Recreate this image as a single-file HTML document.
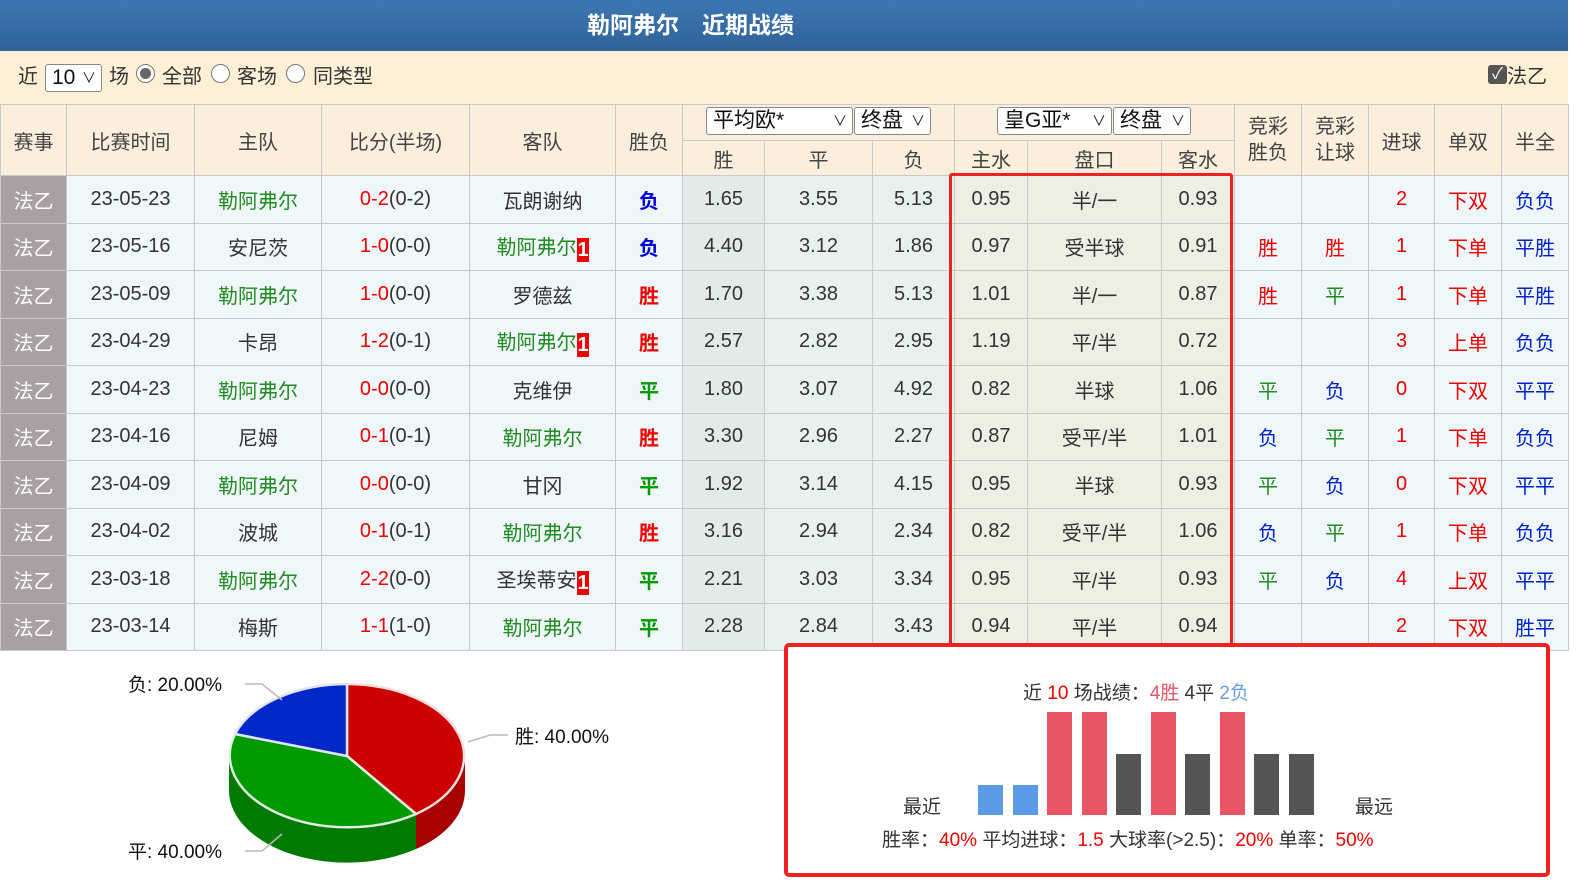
<!DOCTYPE html>
<html><head><meta charset="utf-8"><style>
*{margin:0;padding:0;box-sizing:border-box}
body{width:1592px;height:891px;overflow:hidden;background:#fff;font-family:"Liberation Sans","Noto Sans CJK SC",sans-serif;color:#333;position:relative}
.title{position:absolute;left:0;top:0;width:1568px;height:51px;background:linear-gradient(#3d77b3,#2f6299);color:#fff;font-weight:bold;font-size:23px;line-height:51px}
.title span{position:absolute;left:587px}
.filter{position:absolute;left:0;top:51px;width:1568px;height:53px;background:#fdf0d6;font-size:20px;line-height:53px}
.sel{position:absolute;border:1px solid #888;border-radius:3px;background:#fff;height:28px;font-size:21px;line-height:26px;padding-left:6px;color:#111}
.sel i{position:absolute;right:5px;top:0;font-style:normal;font-size:14px}
.radio{position:absolute;width:19px;height:19px;border:1px solid #777;border-radius:50%;background:#fff;top:13px}
table{position:absolute;left:0;top:104px;border-collapse:collapse;table-layout:fixed;width:1568px;font-size:20px}
td{border:1px solid #c9c9c9;text-align:center;white-space:nowrap;overflow:hidden}
thead td{background:#fbeedd;color:#444}
tbody td{background:#f0f7fb;height:47.5px}
tbody td.lg{background:#a9a1a1;color:#fff}
tbody td.o1{background:#e2eaea}
tbody td.o{background:#e9f0f0}
tbody td.a{background:#eeeee3}
.g{color:#228b22}.r{color:#e00}.b{color:#0022cc}
.rb{color:#e00;font-weight:bold}.bb{color:#0000dd;font-weight:bold}.gb{color:#009900;font-weight:bold}
.one{background:#e00;color:#fff;font-size:20px;font-weight:bold;padding:0 1px;display:inline-block;line-height:24px;width:12px;text-align:center;vertical-align:-2px}
.box1{position:absolute;left:949px;top:173px;width:284px;height:475px;border:3px solid #ee2222;border-radius:3px}
.box2{position:absolute;left:784px;top:643px;width:766px;height:234px;border:4px solid #ee2222;border-radius:5px;background:#fff}
.t{position:absolute;font-size:19px;white-space:nowrap}
</style></head><body>
<div class="title"><span>勒阿弗尔　近期战绩</span></div>
<div class="filter">
<span style="position:absolute;left:18px">近</span>
<div class="sel" style="left:45px;top:13px;width:57px">10<i>∨</i></div>
<span style="position:absolute;left:109px">场</span>
<div class="radio" style="left:136px"><div style="position:absolute;left:3px;top:3px;width:11px;height:11px;border-radius:50%;background:#666"></div></div>
<span style="position:absolute;left:162px">全部</span>
<div class="radio" style="left:211px"></div>
<span style="position:absolute;left:237px">客场</span>
<div class="radio" style="left:286px"></div>
<span style="position:absolute;left:313px">同类型</span>
<div style="position:absolute;left:1488px;top:14px;width:19px;height:19px;background:#555;border-radius:3px;color:#fff;font-size:16px;line-height:19px;text-align:center">✓</div>
<span style="position:absolute;left:1507px">法乙</span>
</div>
<table>
<colgroup><col style="width:66px"><col style="width:128px"><col style="width:127px"><col style="width:148px"><col style="width:146px"><col style="width:67px"><col style="width:82px"><col style="width:108px"><col style="width:82px"><col style="width:73px"><col style="width:134px"><col style="width:73px"><col style="width:67px"><col style="width:67px"><col style="width:66px"><col style="width:67px"><col style="width:67px"></colgroup>
<thead>
<tr style="height:36px"><td rowspan="2">赛事</td><td rowspan="2">比赛时间</td><td rowspan="2">主队</td><td rowspan="2">比分(半场)</td><td rowspan="2">客队</td><td rowspan="2">胜负</td><td colspan="3"></td><td colspan="3"></td><td rowspan="2" style="line-height:26px">竞彩<br>胜负</td><td rowspan="2" style="line-height:26px">竞彩<br>让球</td><td rowspan="2">进球</td><td rowspan="2">单双</td><td rowspan="2">半全</td></tr>
<tr style="height:35px"><td>胜</td><td>平</td><td>负</td><td>主水</td><td>盘口</td><td>客水</td></tr>
</thead>
<tbody>
<tr><td class="lg">法乙</td><td>23-05-23</td><td class="g">勒阿弗尔</td><td><span class="r">0-2</span>(0-2)</td><td>瓦朗谢纳</td><td class="bb">负</td><td class="o1">1.65</td><td class="o">3.55</td><td class="o">5.13</td><td class="a">0.95</td><td class="a">半/一</td><td class="a">0.93</td><td></td><td></td><td class="r">2</td><td class="r">下双</td><td class="b">负负</td></tr>
<tr><td class="lg">法乙</td><td>23-05-16</td><td>安尼茨</td><td><span class="r">1-0</span>(0-0)</td><td class="g">勒阿弗尔<span class="one">1</span></td><td class="bb">负</td><td class="o1">4.40</td><td class="o">3.12</td><td class="o">1.86</td><td class="a">0.97</td><td class="a">受半球</td><td class="a">0.91</td><td class="r">胜</td><td class="r">胜</td><td class="r">1</td><td class="r">下单</td><td class="b">平胜</td></tr>
<tr><td class="lg">法乙</td><td>23-05-09</td><td class="g">勒阿弗尔</td><td><span class="r">1-0</span>(0-0)</td><td>罗德兹</td><td class="rb">胜</td><td class="o1">1.70</td><td class="o">3.38</td><td class="o">5.13</td><td class="a">1.01</td><td class="a">半/一</td><td class="a">0.87</td><td class="r">胜</td><td class="g">平</td><td class="r">1</td><td class="r">下单</td><td class="b">平胜</td></tr>
<tr><td class="lg">法乙</td><td>23-04-29</td><td>卡昂</td><td><span class="r">1-2</span>(0-1)</td><td class="g">勒阿弗尔<span class="one">1</span></td><td class="rb">胜</td><td class="o1">2.57</td><td class="o">2.82</td><td class="o">2.95</td><td class="a">1.19</td><td class="a">平/半</td><td class="a">0.72</td><td></td><td></td><td class="r">3</td><td class="r">上单</td><td class="b">负负</td></tr>
<tr><td class="lg">法乙</td><td>23-04-23</td><td class="g">勒阿弗尔</td><td><span class="r">0-0</span>(0-0)</td><td>克维伊</td><td class="gb">平</td><td class="o1">1.80</td><td class="o">3.07</td><td class="o">4.92</td><td class="a">0.82</td><td class="a">半球</td><td class="a">1.06</td><td class="g">平</td><td class="b">负</td><td class="r">0</td><td class="r">下双</td><td class="b">平平</td></tr>
<tr><td class="lg">法乙</td><td>23-04-16</td><td>尼姆</td><td><span class="r">0-1</span>(0-1)</td><td class="g">勒阿弗尔</td><td class="rb">胜</td><td class="o1">3.30</td><td class="o">2.96</td><td class="o">2.27</td><td class="a">0.87</td><td class="a">受平/半</td><td class="a">1.01</td><td class="b">负</td><td class="g">平</td><td class="r">1</td><td class="r">下单</td><td class="b">负负</td></tr>
<tr><td class="lg">法乙</td><td>23-04-09</td><td class="g">勒阿弗尔</td><td><span class="r">0-0</span>(0-0)</td><td>甘冈</td><td class="gb">平</td><td class="o1">1.92</td><td class="o">3.14</td><td class="o">4.15</td><td class="a">0.95</td><td class="a">半球</td><td class="a">0.93</td><td class="g">平</td><td class="b">负</td><td class="r">0</td><td class="r">下双</td><td class="b">平平</td></tr>
<tr><td class="lg">法乙</td><td>23-04-02</td><td>波城</td><td><span class="r">0-1</span>(0-1)</td><td class="g">勒阿弗尔</td><td class="rb">胜</td><td class="o1">3.16</td><td class="o">2.94</td><td class="o">2.34</td><td class="a">0.82</td><td class="a">受平/半</td><td class="a">1.06</td><td class="b">负</td><td class="g">平</td><td class="r">1</td><td class="r">下单</td><td class="b">负负</td></tr>
<tr><td class="lg">法乙</td><td>23-03-18</td><td class="g">勒阿弗尔</td><td><span class="r">2-2</span>(0-0)</td><td>圣埃蒂安<span class="one">1</span></td><td class="gb">平</td><td class="o1">2.21</td><td class="o">3.03</td><td class="o">3.34</td><td class="a">0.95</td><td class="a">平/半</td><td class="a">0.93</td><td class="g">平</td><td class="b">负</td><td class="r">4</td><td class="r">上双</td><td class="b">平平</td></tr>
<tr><td class="lg">法乙</td><td>23-03-14</td><td>梅斯</td><td><span class="r">1-1</span>(1-0)</td><td class="g">勒阿弗尔</td><td class="gb">平</td><td class="o1">2.28</td><td class="o">2.84</td><td class="o">3.43</td><td class="a">0.94</td><td class="a">平/半</td><td class="a">0.94</td><td></td><td></td><td class="r">2</td><td class="r">下双</td><td class="b">胜平</td></tr>
</tbody></table>
<div class="sel" style="left:706px;top:107px;width:147px">平均欧*<i>∨</i></div>
<div class="sel" style="left:854px;top:107px;width:77px">终盘<i>∨</i></div>
<div class="sel" style="left:997px;top:107px;width:115px">皇G亚*<i>∨</i></div>
<div class="sel" style="left:1113px;top:107px;width:78px">终盘<i>∨</i></div>
<div class="box1"></div>

<svg style="position:absolute;left:0;top:650px" width="780" height="241" viewBox="0 650 780 241">
<path d="M465,756 A118,72 0 0 1 416,814 L416,849 A118,72 0 0 0 465,791 Z" fill="#a80000"/>
<path d="M416,814 A118,72 0 0 1 229,756 L229,791 A118,72 0 0 0 416,849 Z" fill="#007a00"/>
<path d="M347,756 L347,684 A118,72 0 0 1 416,814 Z" fill="#cc0000" stroke="#f2dede" stroke-width="2.5"/>
<path d="M347,756 L416,814 A118,72 0 0 1 235,734 Z" fill="#009900" stroke="#e0f0e0" stroke-width="2.5"/>
<path d="M347,756 L235,734 A118,72 0 0 1 347,684 Z" fill="#0027c8" stroke="#e0e4f4" stroke-width="2.5"/>
<polyline points="245,684 262,684 282,700" fill="none" stroke="#bbb" stroke-width="1.5"/>
<polyline points="508,735 490,735 468,742" fill="none" stroke="#bbb" stroke-width="1.5"/>
<polyline points="245,851 262,851 282,834" fill="none" stroke="#bbb" stroke-width="1.5"/>
<text x="128" y="691" font-size="19" fill="#111" font-family="Liberation Sans, Noto Sans CJK SC, sans-serif">负: 20.00%</text>
<text x="515" y="743" font-size="19" fill="#111" font-family="Liberation Sans, Noto Sans CJK SC, sans-serif">胜: 40.00%</text>
<text x="128" y="858" font-size="19" fill="#111" font-family="Liberation Sans, Noto Sans CJK SC, sans-serif">平: 40.00%</text>
</svg>

<div class="box2"></div>
<div class="t" style="left:1023px;top:678px">近 <span style="color:#e00">10</span> 场战绩：<span style="color:#e85566">4胜</span> 4平 <span style="color:#6a9be0">2负</span></div>
<div style="position:absolute;left:978px;top:785px;width:25px;height:30px;background:#5a9be6"></div>
<div style="position:absolute;left:1013px;top:785px;width:25px;height:30px;background:#5a9be6"></div>
<div style="position:absolute;left:1047px;top:712px;width:25px;height:103px;background:#e85566"></div>
<div style="position:absolute;left:1082px;top:712px;width:25px;height:103px;background:#e85566"></div>
<div style="position:absolute;left:1116px;top:754px;width:25px;height:61px;background:#555"></div>
<div style="position:absolute;left:1151px;top:712px;width:25px;height:103px;background:#e85566"></div>
<div style="position:absolute;left:1185px;top:754px;width:25px;height:61px;background:#555"></div>
<div style="position:absolute;left:1220px;top:712px;width:25px;height:103px;background:#e85566"></div>
<div style="position:absolute;left:1254px;top:754px;width:25px;height:61px;background:#555"></div>
<div style="position:absolute;left:1289px;top:754px;width:25px;height:61px;background:#555"></div>
<div class="t" style="left:903px;top:792px">最近</div>
<div class="t" style="left:1355px;top:792px">最远</div>
<div class="t" style="left:882px;top:825px">胜率：<span style="color:#e00">40%</span> 平均进球：<span style="color:#e00">1.5</span> 大球率(&gt;2.5)：<span style="color:#e00">20%</span> 单率：<span style="color:#e00">50%</span></div>
</body></html>
